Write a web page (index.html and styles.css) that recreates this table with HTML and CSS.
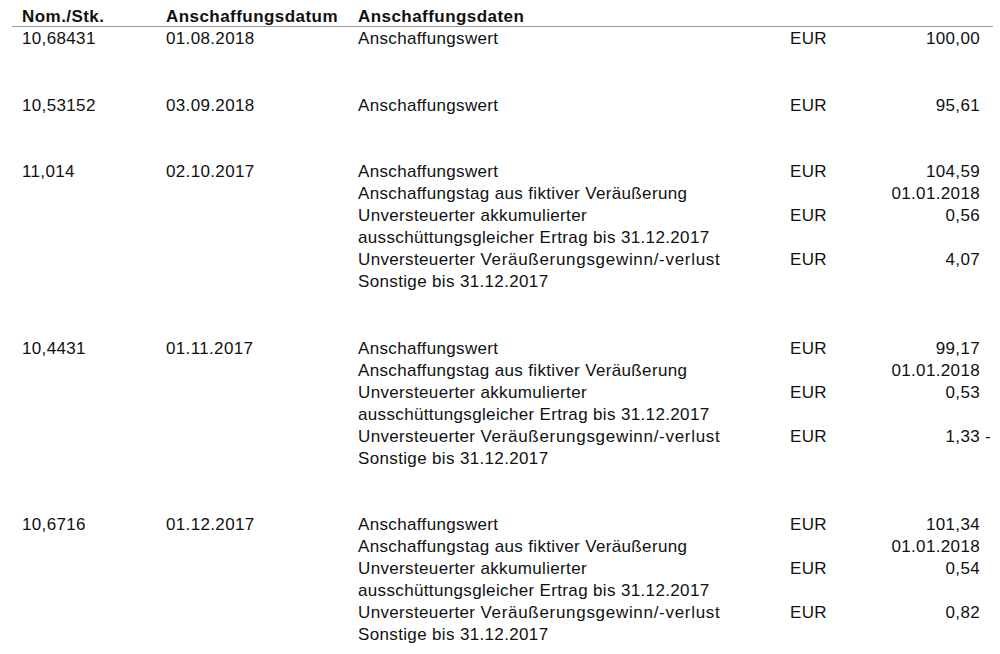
FILE: index.html
```html
<!DOCTYPE html>
<html lang="de">
<head>
<meta charset="utf-8">
<title>Anschaffungsdaten</title>
<link rel="stylesheet" href="styles.css">
</head>
<body>
<div class="sheet">
  <div class="head">
    <div>Nom./Stk.</div>
    <div>Anschaffungsdatum</div>
    <div>Anschaffungsdaten</div>
  </div>

  <div class="group">
    <div>10,68431</div>
    <div>01.08.2018</div>
    <div class="details">
      <div class="label">Anschaffungswert</div><div class="cur">EUR</div><div class="amt">100,00</div><div class="sign"></div>
    </div>
  </div>

  <div class="group">
    <div>10,53152</div>
    <div>03.09.2018</div>
    <div class="details">
      <div class="label">Anschaffungswert</div><div class="cur">EUR</div><div class="amt">95,61</div><div class="sign"></div>
    </div>
  </div>

  <div class="group">
    <div>11,014</div>
    <div>02.10.2017</div>
    <div class="details">
      <div class="label">Anschaffungswert</div><div class="cur">EUR</div><div class="amt">104,59</div><div class="sign"></div>
      <div class="label">Anschaffungstag aus fiktiver Veräußerung</div><div class="cur"></div><div class="amt">01.01.2018</div><div class="sign"></div>
      <div class="label">Unversteuerter akkumulierter<br>ausschüttungsgleicher Ertrag bis 31.12.2017</div><div class="cur">EUR</div><div class="amt">0,56</div><div class="sign"></div>
      <div class="label">Unversteuerter <span class="wide">Veräußerungsgewinn/-verlust</span><br>Sonstige bis 31.12.2017</div><div class="cur">EUR</div><div class="amt">4,07</div><div class="sign"></div>
    </div>
  </div>

  <div class="group">
    <div>10,4431</div>
    <div>01.11.2017</div>
    <div class="details">
      <div class="label">Anschaffungswert</div><div class="cur">EUR</div><div class="amt">99,17</div><div class="sign"></div>
      <div class="label">Anschaffungstag aus fiktiver Veräußerung</div><div class="cur"></div><div class="amt">01.01.2018</div><div class="sign"></div>
      <div class="label">Unversteuerter akkumulierter<br>ausschüttungsgleicher Ertrag bis 31.12.2017</div><div class="cur">EUR</div><div class="amt">0,53</div><div class="sign"></div>
      <div class="label">Unversteuerter <span class="wide">Veräußerungsgewinn/-verlust</span><br>Sonstige bis 31.12.2017</div><div class="cur">EUR</div><div class="amt">1,33</div><div class="sign">-</div>
    </div>
  </div>

  <div class="group">
    <div>10,6716</div>
    <div>01.12.2017</div>
    <div class="details">
      <div class="label">Anschaffungswert</div><div class="cur">EUR</div><div class="amt">101,34</div><div class="sign"></div>
      <div class="label">Anschaffungstag aus fiktiver Veräußerung</div><div class="cur"></div><div class="amt">01.01.2018</div><div class="sign"></div>
      <div class="label">Unversteuerter akkumulierter<br>ausschüttungsgleicher Ertrag bis 31.12.2017</div><div class="cur">EUR</div><div class="amt">0,54</div><div class="sign"></div>
      <div class="label">Unversteuerter <span class="wide">Veräußerungsgewinn/-verlust</span><br>Sonstige bis 31.12.2017</div><div class="cur">EUR</div><div class="amt">0,82</div><div class="sign"></div>
    </div>
  </div>
</div>
</body>
</html>
```

FILE: styles.css
```css
html, body {
  margin: 0;
  padding: 0;
  background: #ffffff;
}

body {
  font-family: "Liberation Sans", Arial, Helvetica, sans-serif;
  font-size: 17px;
  letter-spacing: 0.35px;
  color: #111111;
}

.sheet {
  margin-left: 12px;
  width: 981px;
}

.head,
.group {
  display: grid;
  grid-template-columns: 144px 192px 1fr;
  padding-left: 10px;
}

.head {
  padding-top: 7px;
  line-height: 19px;
  font-weight: bold;
  letter-spacing: 0.45px;
  border-bottom: 1px solid #9c9c9c;
  margin-bottom: 1px;
}

.group {
  line-height: 22px;
  padding-bottom: 44.5px;
}

.group:last-child {
  padding-bottom: 0;
}

.details {
  display: grid;
  grid-template-columns: 432px 60px 1fr 13px;
  align-items: start;
}

.wide {
  letter-spacing: 0.7px;
}

.amt {
  text-align: right;
}

.sign {
  padding-left: 5px;
}
```
